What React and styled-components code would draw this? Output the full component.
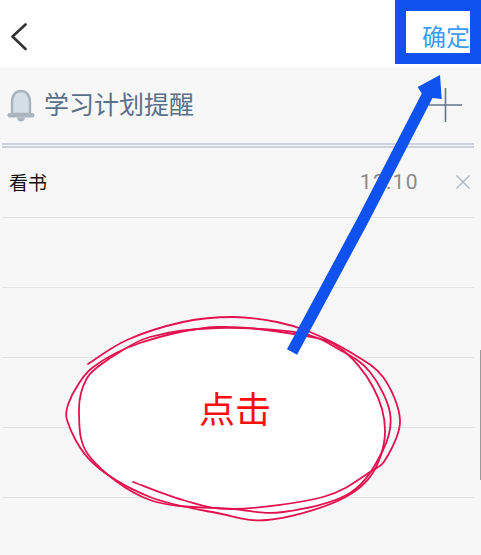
import * as React from 'react';
import styled, { createGlobalStyle } from 'styled-components';

const GlobalStyle = createGlobalStyle`
  html, body {
    margin: 0;
    padding: 0;
    background: #f7f7f7;
  }
  * {
    box-sizing: border-box;
  }
`;

const FONT = `Roboto, "Noto Sans CJK SC", sans-serif`;

const Screen = styled.div`
  position: relative;
  width: 481px;
  height: 555px;
  overflow: hidden;
  background: #f7f7f7;
  font-family: ${FONT};
`;

const Header = styled.header`
  height: 67px;
  background: #fff;
  display: flex;
  align-items: center;
  justify-content: space-between;
  padding: 8px 11px 0 10px;
`;

const BackButton = styled.button`
  display: flex;
  border: 0;
  padding: 0;
  background: none;
`;

const Confirm = styled.span`
  font-size: 24px;
  line-height: 30px;
  color: #3d9bf3;
`;

const TitleRow = styled.div`
  height: 76px;
  display: flex;
  align-items: center;
  padding: 0 18px 0 7px;
`;

const Title = styled.h1`
  flex: 1;
  margin: 2px 0 0 9px;
  font-size: 25px;
  line-height: 32px;
  font-weight: 400;
  color: #5b6f88;
`;

const List = styled.ul`
  list-style: none;
  margin: 0 7px 0 2px;
  padding: 0;
  border-top: 5px double #cdd1dc;
`;

const Row = styled.li`
  height: 70px;
  display: flex;
  align-items: center;
  padding: 0 4px 2px 7px;
  border-bottom: 1px solid #e3e3e5;
`;

const RowText = styled.span`
  flex: 1;
  font-size: 19px;
  color: #111;
`;

const RowTime = styled.span`
  font-size: 21px;
  letter-spacing: 1.4px;
  color: #8a8a8a;
  margin-right: 37px;
`;

const Scrollbar = styled.div`
  position: absolute;
  right: 0;
  top: 350px;
  width: 1px;
  height: 130px;
  background: #9a9a9a;
`;

const Highlight = styled.div`
  position: absolute;
  top: 0;
  right: 0;
  width: 86px;
  height: 64px;
  border: 11px solid #0f52f0;
`;

const Annotation = styled.svg`
  position: absolute;
  inset: 0;
`;

const ClickLabel = styled.span`
  position: absolute;
  left: 199px;
  top: 389px;
  font-size: 36px;
  line-height: 44px;
  color: #fb0d0d;
`;

// hand drawn loops of the red circle, as points along each stroke
const LOOP_A = [[88, 364], [127, 340], [183, 322], [233, 317], [277, 322], [310, 332], [350, 352], [383, 377], [400, 420], [387, 457], [370, 472], [323, 497], [233, 509], [183, 500], [133, 482]];
const LOOP_B = [[72, 395], [92, 368], [140, 343], [217, 327], [300, 335], [340, 348], [373, 387], [385, 433], [370, 477], [333, 503], [267, 520], [217, 513], [150, 497], [93, 463], [67, 420], [72, 395]];
const LOOP_C = [[110, 358], [87, 378], [79, 413], [90, 457], [150, 500], [233, 509], [283, 512], [350, 493], [383, 450], [390, 413], [370, 372], [340, 350], [300, 333], [217, 328], [150, 337], [110, 358]];

function smoothPath(points) {
  let d = `M${points[0][0]} ${points[0][1]}`;
  for (let i = 0; i < points.length - 1; i++) {
    const p0 = points[i - 1] || points[i];
    const p1 = points[i];
    const p2 = points[i + 1];
    const p3 = points[i + 2] || p2;
    const c1x = p1[0] + (p2[0] - p0[0]) / 6;
    const c1y = p1[1] + (p2[1] - p0[1]) / 6;
    const c2x = p2[0] - (p3[0] - p1[0]) / 6;
    const c2y = p2[1] - (p3[1] - p1[1]) / 6;
    d += ` C${c1x} ${c1y} ${c2x} ${c2y} ${p2[0]} ${p2[1]}`;
  }
  return d;
}

function Bell() {
  return (
    <svg width="28" height="34" viewBox="0 0 28 34">
      <path d="M5 26 V14 C5 7 9 3 14 3 C19 3 23 7 23 14 V26 Z" fill="#d3dee6" stroke="#a9b4bf" strokeWidth="2.4" />
      <rect x="0.5" y="25" width="27" height="4.5" rx="2.2" fill="#a9b4bf" />
      <path d="M10 29.5 H18 C18 32 16 33.5 14 33.5 C12 33.5 10 32 10 29.5 Z" fill="#a9b4bf" />
    </svg>
  );
}

export default function App() {
  return (
    <Screen>
      <GlobalStyle />
      <Header>
        <BackButton aria-label="back">
          <svg width="18" height="30" viewBox="0 0 18 30">
            <path d="M15.5 1.5 L2.5 13.5 L15.5 26" fill="none" stroke="#333" strokeWidth="2.6" strokeLinecap="round" strokeLinejoin="round" />
          </svg>
        </BackButton>
        <Confirm>确定</Confirm>
      </Header>
      <TitleRow>
        <Bell />
        <Title>学习计划提醒</Title>
        <svg width="34" height="34" viewBox="0 0 34 34">
          <path d="M0 17 H33 M16.5 0 V34" fill="none" stroke="#64758a" strokeWidth="1.6" />
        </svg>
      </TitleRow>
      <List>
        <Row>
          <RowText>看书</RowText>
          <RowTime>12:10</RowTime>
          <svg width="14" height="14" viewBox="0 0 14 14">
            <path d="M0.5 0.5 L13.5 13.5 M13.5 0.5 L0.5 13.5" fill="none" stroke="#b4bac4" strokeWidth="1.5" />
          </svg>
        </Row>
        <Row />
        <Row />
        <Row />
        <Row />
      </List>
      <Scrollbar />
      <Highlight />
      <Annotation width="481" height="555" viewBox="0 0 481 555">
        <path d={smoothPath(LOOP_B)} fill="#fff" />
        <g fill="none" stroke="#e2114f" strokeWidth="1.8" strokeLinecap="round">
          <path d={smoothPath(LOOP_A)} />
          <path d={smoothPath(LOOP_B)} />
          <path d={smoothPath(LOOP_C)} />
        </g>
        <path d="M292 352 L363 220 L428 94" fill="none" stroke="#0f52f0" strokeWidth="11.5" />
        <path d="M440 75 L417.7 87 L424 97 L441.7 99 Z" fill="#0f52f0" />
      </Annotation>
      <ClickLabel>点击</ClickLabel>
    </Screen>
  );
}
